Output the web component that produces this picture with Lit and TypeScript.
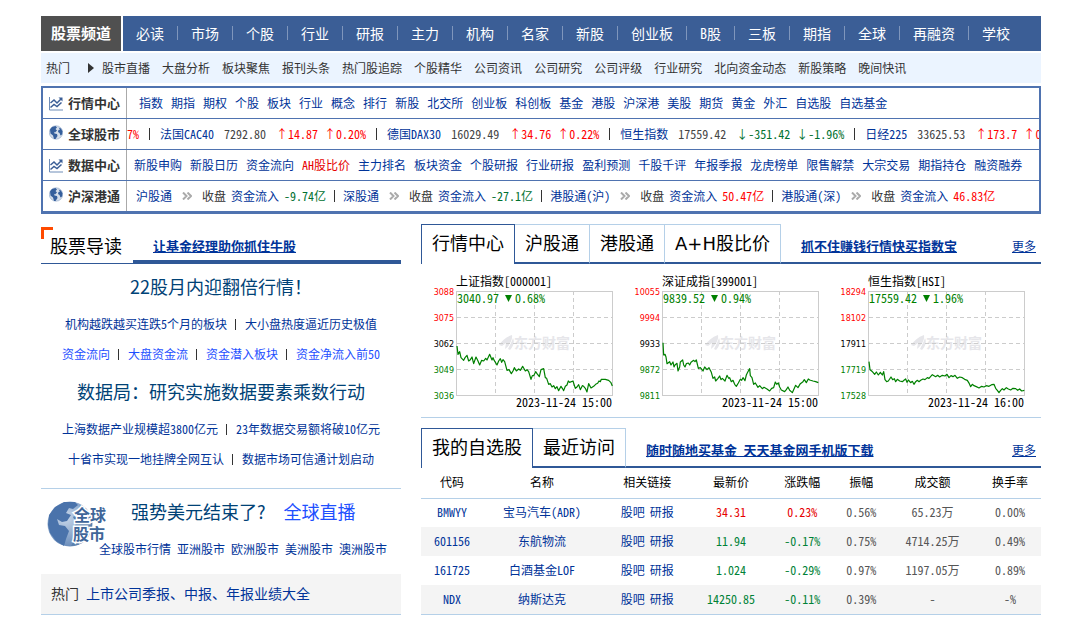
import { LitElement, html, svg, css } from "lit";
import { customElement, state, property } from "lit/decorators.js";
import { classMap } from "lit/directives/class-map.js";

const base = css`
  :host { display: block; }
  * { box-sizing: border-box; }
  a { color: #003399; text-decoration: none; }
  a:hover { text-decoration: underline; }
  svg { display: block; }
`;

type Quote = { name: string; price: string; diff: string; pct: string; up: boolean };
type Flow = { name: string; value: string; up: boolean };
type Chart = {
  title: string; price: string; pct: string; date: string; axis: string[]; points: string;
};

const navItems = "必读 市场 个股 行业 研报 主力 机构 名家 新股 创业板 B股 三板 期指 全球 再融资 学校".split(" ");
const hotItems = "股市直播 大盘分析 板块聚焦 报刊头条 热门股追踪 个股精华 公司资讯 公司研究 公司评级 行业研究 北向资金动态 新股策略 晚间快讯".split(" ");
const marketItems = "指数 期指 期权 个股 板块 行业 概念 排行 新股 北交所 创业板 科创板 基金 港股 沪深港 美股 期货 黄金 外汇 自选股 自选基金".split(" ");
const dataItems = "新股申购 新股日历 资金流向 AH股比价 主力排名 板块资金 个股研报 行业研报 盈利预测 千股千评 年报季报 龙虎榜单 限售解禁 大宗交易 期指持仓 融资融券".split(" ");

const quotes: Quote[] = [
  { name: "法国CAC40", price: "7292.80", diff: "14.87", pct: "0.20%", up: true },
  { name: "德国DAX30", price: "16029.49", diff: "34.76", pct: "0.22%", up: true },
  { name: "恒生指数", price: "17559.42", diff: "-351.42", pct: "-1.96%", up: false },
  { name: "日经225", price: "33625.53", diff: "173.7", pct: "0.52%", up: true },
];
const flows: Flow[] = [
  { name: "沪股通", value: "-9.74亿", up: false },
  { name: "深股通", value: "-27.1亿", up: false },
  { name: "港股通(沪)", value: "50.47亿", up: true },
  { name: "港股通(深)", value: "46.83亿", up: true },
];

// Curve points are thirds of a pixel, measured from the plot's top left corner.
const charts: Chart[] = [
  {
    title: "上证指数[000001]", price: "3040.97", pct: "0.68%", date: "2023-11-24 15:00",
    axis: ["3088", "3075", "3062", "3049", "3036"],
    points: "0,165 3,190 8,182 12,200 20,208 24,200 30,193 35,210 40,206 45,198 50,218 57,198 62,208 68,222 74,208 80,210 86,202 90,207 98,190 105,207 108,200 112,209 120,222 125,210 130,203 134,214 138,206 143,212 150,238 156,236 163,248 168,240 172,230 178,240 185,234 190,238 197,226 205,240 210,236 215,242 222,265 226,254 230,254 236,242 240,248 247,257 252,236 260,233 265,260 269,262 275,280 280,278 285,288 290,284 295,293 300,287 305,299 312,286 316,292 320,299 325,286 330,282 334,270 338,274 348,270 355,292 360,288 365,281 370,296 376,284 380,286 385,292 390,303 395,278 402,291 410,286 416,280 422,277 426,270 430,272 433,265 445,265 455,268 462,275 466,285",
  },
  {
    title: "深证成指[399001]", price: "9839.52", pct: "0.94%", date: "2023-11-24 15:00",
    axis: ["10055", "9994", "9933", "9872", "9811"],
    points: "0,155 2,192 6,190 9,198 12,218 20,212 24,222 30,213 33,228 36,222 42,217 45,240 50,228 52,213 59,207 62,222 66,228 70,218 76,216 80,222 84,214 92,208 96,212 100,207 106,232 112,230 120,240 125,228 132,236 138,230 145,244 150,262 155,258 158,270 165,262 170,255 174,266 178,262 186,270 192,253 197,262 200,260 205,272 210,268 215,280 220,286 226,276 232,265 236,268 240,260 246,269 250,252 254,244 260,233 262,254 267,260 272,280 277,276 285,289 290,284 298,293 303,289 312,294 320,300 326,292 332,290 337,273 341,280 346,276 350,288 355,297 365,302 370,296 375,288 380,298 388,305 392,296 398,283 405,290 412,278 420,272 424,266 430,275 436,264 440,267 450,270 458,272 466,275",
  },
  {
    title: "恒生指数[HSI]", price: "17559.42", pct: "1.96%", date: "2023-11-24 16:00",
    axis: ["18294", "18102", "17911", "17719", "17528"],
    points: "0,212 3,236 8,240 12,244 17,250 22,243 28,252 34,244 40,252 44,242 48,266 53,272 58,270 66,258 71,266 76,263 80,272 85,265 92,270 100,272 105,268 110,264 114,274 118,267 125,275 130,271 135,280 140,272 145,268 150,272 155,268 162,264 168,266 175,260 180,262 190,251 200,257 206,253 212,258 220,253 228,255 234,250 240,260 246,254 252,257 258,253 265,262 272,258 280,260 287,265 295,268 301,278 305,287 310,280 315,284 322,287 330,291 338,286 345,288 352,284 360,286 368,281 375,280 380,292 385,298 390,305 395,298 400,293 405,297 412,290 418,294 425,297 432,292 440,293 446,298 452,294 458,300 466,298",
  },
];

const stocks = [
  ["BMWYY", "宝马汽车(ADR)", "34.31", "0.23%", "0.56%", "65.23万", "0.00%"],
  ["601156", "东航物流", "11.94", "-0.17%", "0.75%", "4714.25万", "0.49%"],
  ["161725", "白酒基金LOF", "1.024", "-0.29%", "0.97%", "1197.05万", "0.89%"],
  ["NDX", "纳斯达克", "14250.85", "-0.11%", "0.39%", "-", "-%"],
];

const chartIcon = html`<svg class="icon" width="14" height="15" viewBox="0 0 14 15" aria-hidden="true">
  <path d="M.5 1v13H14" fill="none" stroke="#6f8db8" />
  <path d="M1.5 7 5 4l3 3 4-4" fill="none" stroke="#3b5e96" stroke-width="1.5" />
  <path d="m1.5 11.5 3.5-3 3 2 4.500-4" fill="none" stroke="#3b5e96" stroke-width="1.500" />
  <path d="M9.500 1.500H13.500V5.500Z" fill="#3b5e96" />
</svg>`;

const globeIcon = html`<svg class="icon globe" width="14" height="15" viewBox="0 0 14 15" aria-hidden="true">
  <circle cx="7" cy="7.500" r="6.700" fill="#d5deea" stroke="#8ba4c8" stroke-width=".6" />
  <path d="M1 4.500 3 2 6.500 1 8 2.500 6.500 4 8 5.500 6 7.500 5 6.800 5.500 8.500 8 9 8.500 11 6.500 14H5L4 10.500 1.500 8.500Z" fill="#355f9c" />
  <path d="M9.500 2.500 12 3.500 13.500 6.500 13 9.500 11.500 10.500 10.500 8 9 7 9.500 5 11 4.500Z" fill="#355f9c" />
</svg>`;

@customElement("index-chart")
class IndexChart extends LitElement {
  @property({ attribute: false }) chart!: Chart;

  static styles = [base, css`
    .plot { font: 12px "Noto Sans Mono CJK SC", "Noto Sans CJK SC", sans-serif; }
    .axis { font: 8px "DejaVu Sans", sans-serif; text-anchor: end; }
    .mark { font: bold 14px "Noto Sans CJK SC", sans-serif; fill: #e6e6ea; }
    .down { fill: #008000; }
    .end { text-anchor: end; }
    .grid { stroke: #cccccc; stroke-dasharray: 4 3; fill: none; }
    .frame { stroke: #cccccc; fill: none; }
    .curve { stroke: #008000; fill: none; stroke-width: 3.600; stroke-linejoin: round; }
  `];

  render() {
    const c = this.chart;
    const colors = ["#ff0000", "#ff0000", "#000000", "#008000", "#008000"];
    return html`<svg class="plot" width="206" height="140" viewBox="0 0 206 140" role="img" aria-label=${c.title}>
      <path d="M84 73C87 69 91 65 97 63 98 68 94 74 90 77L91 71 87 74ZM93 77C95 73 97 69 98 66 100 70 98 75 95 78Z" fill="#e6e6ea" />
      <text class="mark" x="99" y="76">东方财富</text>
      <path class="grid" d="M42 45.500H198M42 71.500H198M42 97.500H198M80.500 19V124M119.500 19V124M158.500 19V124" />
      <rect class="frame" x="41.500" y="19.500" width="156" height="104" />
      ${c.axis.map((v, i) => svg`<text class="axis" x="39" y=${23 + i * 26} fill=${colors[i]}>${v}</text>`)}
      <text x="41" y="14">${c.title}</text>
      <text class="down" x="42" y="31">${c.price}</text>
      <path class="down" transform="translate(${44 + c.price.length * 6} 23)" d="M4 0H11L7.500 7Z" />
      <text class="down" x=${58 + c.price.length * 6} y="31">${c.pct}</text>
      <polyline class="curve" transform="translate(42 19) scale(.3333)" points=${c.points} />
      <text class="end" x="197" y="135">${c.date}</text>
    </svg>`;
  }
}

@customElement("app-root")
class AppRoot extends LitElement {
  @state() marketTab = 0;
  @state() stockTab = 0;

  static styles = [base, css`
    :host {
      min-height: 100vh; background: #fff; color: #333; padding: 16px 32px 0 41px;
      font: 12px/20px "Noto Sans Mono CJK SC", "Noto Sans CJK SC", sans-serif;
    }
    .main-nav { display: flex; gap: 2px; height: 35px; color: #fff; line-height: 34px; overflow: hidden; }
    .main-nav a { color: #fff; }
    .channel { background: #505050; width: 80px; text-align: center; font-size: 15px; font-weight: bold; flex: none; }
    .nav-list { flex: 1; display: flex; align-items: center; padding-bottom: 2px; background: #3b5e96; font-size: 14px; white-space: nowrap; }
    .nav-list a { padding: 0 13px; line-height: 14px; border-right: 1px solid #7f96bc; }
    .nav-list a:last-child { border: 0; }
    .hot-nav { display: flex; align-items: center; gap: 12px; height: 30px; margin: 2px 0 3px; padding-left: 5px; background: #ebf4ff; white-space: nowrap; overflow: hidden; }
    .hot-nav a { color: #333; }
    .hot-label { display: flex; align-items: center; gap: 18px; margin-right: -4px; }

    .hub { border: 2px solid #4f73b0; }
    .hub-row { display: flex; height: 31px; border-bottom: 1px solid #4f73b0; }
    .hub-title { flex: none; width: 84px; display: flex; align-items: center; gap: 5px; padding-left: 6px; border-right: 1px solid #aaa; font-size: 13px; font-weight: bold; white-space: nowrap; }
    .globe { margin-bottom: 4px; }
    .hub-body { flex: 1; min-width: 0; display: flex; align-items: center; overflow: hidden; white-space: nowrap; }
    .links { gap: 8px; }
    .market { padding-left: 12px; }
    .data { padding-left: 7px; }
    .flows { padding-left: 9px; }
    .quote { display: flex; flex: none; }
    .price { margin: 0 10px; color: #444; }
    .pct { margin-left: 6px; }
    .bar { flex: none; display: inline-block; width: 1px; height: 12px; margin: 0 10px; background: #333; }
    .flow { display: flex; flex: none; align-items: center; }
    .flow .chevron { margin: 0 10px; }
    .flow-state { margin-right: 5px; }
    .flow-link { margin-right: 5px; }
    .flows .bar { margin: 0 8px; }
    .red { color: #ff0000; }
    .hub-body a.red { color: #e60000; }
    .green { color: #007130; }

    .columns { display: grid; grid-template-columns: minmax(0, 18fr) minmax(0, 31fr); gap: 20px; margin-top: 10px; }
    .sans { font-family: "Noto Sans CJK SC", sans-serif; }

    .guide-head { display: flex; height: 37px; margin-top: 3px; }
    .guide-title { position: relative; width: 92px; margin: 0; padding-left: 9px; border-bottom: 1px solid #2f5897; font-size: 18px; font-weight: normal; line-height: 36px; color: #000; white-space: nowrap; }
    .guide-title::before { content: ""; position: absolute; left: 0; top: 0; width: 9px; height: 9px; border: solid #ff4a00; border-width: 3px 0 0 3px; }
    .guide-promo { flex: 1; padding-left: 20px; border-bottom: 4px solid #2f5897; line-height: 37px; }
    .promo { font-size: 13px; font-weight: bold; text-decoration: underline; white-space: nowrap; }
    .guide-list { text-align: center; padding-bottom: 14px; border-bottom: 1px solid #b5d0e8; white-space: nowrap; }
    .headline { margin: 0; font-size: 18px; font-weight: normal; line-height: 45px; }
    .headline a { color: #004276; }
    .line { margin: 0; line-height: 30px; }
    .line .bar { height: 11px; margin: 0 9px 0 8px; vertical-align: -1px; }
    .bright, .headline a.bright { color: #1e50ff; }

    .world { display: grid; grid-template-columns: 52px 1fr; height: 85px; padding: 12px 0 0 6px; white-space: nowrap; }
    .world svg { overflow: visible; }
    .world .headline { line-height: 20px; padding-left: 32px; }
    .world .headline a + a { margin-left: 18px; }
    .logo-text { font: bold 16px "Noto Sans CJK SC", sans-serif; fill: #3f6699; stroke: #fff; stroke-width: 3px; paint-order: stroke; }
    .regions { display: flex; gap: 6px; margin-top: 18px; }
    .report { height: 41px; margin: 0; padding-left: 10px; background: #f4f4f4; border-bottom: 1px solid #b5d0e8; font-size: 14px; line-height: 38px; white-space: nowrap; }

    .tabs { display: flex; height: 40px; }
    .tab { flex: none; border: 1px solid #b5d0e8; border-width: 1px 1px 0 0; border-bottom: 2px solid #2f5897; background: #fff; margin: 0; padding: 0 10px; font: 18px/37px "DejaVu Sans", "Noto Sans CJK SC", sans-serif; color: #000; cursor: pointer; }
    .tab.active { border: 1px solid #2f5897; border-bottom: 0; padding: 0 10px 2px; }
    .tabs-rest { flex: 1; display: flex; justify-content: space-between; padding: 5px 5px 0 20px; border-bottom: 2px solid #2f5897; line-height: 34px; }
    .more { text-decoration: underline; }
    .charts { display: grid; grid-template-columns: repeat(3, 206px); margin-left: -6px; padding: 8px 0 5px; }
    .charts-box { border-bottom: 1px solid #b5d0e8; margin-bottom: 10px; overflow: hidden; }

    table { width: 100%; border-collapse: collapse; table-layout: fixed; border-bottom: 1px solid #b5d0e8; text-align: center; white-space: nowrap; }
    th { height: 30px; padding: 0 0 2px; font-weight: normal; color: #000; border-bottom: 1px solid #b5d0e8; }
    td { height: 29px; padding: 0 0 1px; color: #555; }
    tbody tr:nth-child(even) { background: #f4f4f4; }
    td a + a { margin-left: 5px; }
    td.up { color: #e60000; }
    td.down { color: #008237; }
    .c-code { width: 10%; }
    .c-name { width: 19%; }
    .c-link { width: 15%; }
    .c-price { width: 12%; }
    .c-rate { width: 11%; }
    .c-amp { width: 8%; }
    .c-amount { width: 15%; }
  `];

  private bar = html`<i class="bar"></i>`;

  private link(text: string, cls = "") {
    return html`<a class=${cls} href="#">${text}</a>`;
  }

  private hubRow(title: string, icon: unknown, cls: string, body: unknown) {
    return html`<div class="hub-row">
      <div class="hub-title">${icon}<span>${title}</span></div>
      <div class="hub-body ${cls}">${body}</div>
    </div>`;
  }

  private quote(q: Quote) {
    const tone = q.up ? "red" : "green";
    const arrow = q.up ? "↑" : "↓";
    return html`${this.bar}<span class="quote">${this.link(q.name)}<span class="price">${q.price}</span><span class=${tone}>${arrow}${q.diff}</span><span class="pct ${tone}">${arrow}${q.pct}</span></span>`;
  }

  private flow(f: Flow, i: number) {
    return html`${i ? this.bar : ""}<span class="flow">${this.link(f.name)}
      <svg class="chevron" width="10" height="8" viewBox="0 0 10 8" aria-hidden="true"><path d="m1 .5 3.500 3.500L1 7.500M5.500.5 9 4 5.500 7.500" fill="none" stroke="#aaa" stroke-width="2" /></svg>
      <span class="flow-state">收盘</span>${this.link("资金流入", "flow-link")}<span class=${f.up ? "red" : "green"}>${f.value}</span></span>`;
  }

  private tabs(names: string[], active: number, pick: (i: number) => void, promo: string) {
    return html`<div class="tabs">
      ${names.map((n, i) => html`<button class=${classMap({ tab: true, active: i === active })} @click=${() => pick(i)}>${n}</button>`)}
      <div class="tabs-rest">${this.link(promo, "promo")}${this.link("更多", "more")}</div>
    </div>`;
  }

  private line(items: string[], cls = "") {
    return html`<p class="line">${items.map((t, i) => html`${i ? this.bar : ""}${this.link(t, cls)}`)}</p>`;
  }

  render() {
    return html`
      <nav class="main-nav">
        <a class="channel" href="#">股票频道</a>
        <div class="nav-list">${navItems.map((t) => this.link(t))}</div>
      </nav>
      <nav class="hot-nav">
        <span class="hot-label">热门<svg width="6" height="10" viewBox="0 0 6 10" aria-hidden="true"><path d="M0 0 6 5 0 10Z" fill="#333" /></svg></span>
        ${hotItems.map((t) => this.link(t))}
      </nav>
      <section class="hub">
        ${this.hubRow("行情中心", chartIcon, "links market", marketItems.map((t) => this.link(t)))}
        ${this.hubRow("全球股市", globeIcon, "", html`<span class="red">7%</span>${quotes.map((q) => this.quote(q))}`)}
        ${this.hubRow("数据中心", chartIcon, "links data", dataItems.map((t) => this.link(t, t.startsWith("AH") ? "red" : "")))}
        ${this.hubRow("沪深港通", globeIcon, "flows", flows.map((f, i) => this.flow(f, i)))}
      </section>
      <div class="columns">
        <section>
          <header class="guide-head">
            <h2 class="guide-title sans">股票导读</h2>
            <div class="guide-promo">${this.link("让基金经理助你抓住牛股", "promo")}</div>
          </header>
          <div class="guide-list">
            <h3 class="headline sans">${this.link("22股月内迎翻倍行情！")}</h3>
            ${this.line(["机构越跌越买连跌5个月的板块", "大小盘热度逼近历史极值"])}
            ${this.line(["资金流向", "大盘资金流", "资金潜入板块", "资金净流入前50"], "bright")}
            <h3 class="headline sans">${this.link("数据局：研究实施数据要素乘数行动")}</h3>
            ${this.line(["上海数据产业规模超3800亿元", "23年数据交易额将破10亿元"])}
            ${this.line(["十省市实现一地挂牌全网互认", "数据市场可信通计划启动"])}
          </div>
          <div class="world">
            <svg width="62" height="48" viewBox="0 0 62 48" aria-label="全球股市">
              <defs><radialGradient id="sea" cx=".4" cy=".35" r=".7"><stop offset="0" stop-color="#c9d8ea" /><stop offset="1" stop-color="#6488b8" /></radialGradient></defs>
              <circle cx="23" cy="23" r="22.500" fill="url(#sea)" />
              <path d="M2 14 8 6 17 1 28 1 31 4 26 8 22 7 19 12 24 14 20 20 15 21 10 18 12 24 18 25 22 30 19 38 17 45 9 40 3 32 1 24Z" fill="#4a73ab" />
              <path d="M33 4 41 10 45 18 45 29 40 37 31 44 24 45 29 36 26 30 29 22 26 16 31 12Z" fill="#5a80ad" />
              <text class="logo-text" x="27" y="20">全球</text>
              <text class="logo-text" x="26" y="39">股市</text>
            </svg>
            <div>
              <h3 class="headline sans">${this.link("强势美元结束了?")}${this.link("全球直播", "bright")}</h3>
              <div class="regions">${["全球股市行情", "亚洲股市", "欧洲股市", "美洲股市", "澳洲股市"].map((t) => this.link(t))}</div>
            </div>
          </div>
          <p class="report">热门 ${this.link("上市公司季报、中报、年报业绩大全")}</p>
        </section>
        <section>
          ${this.tabs(["行情中心", "沪股通", "港股通", "A+H股比价"], this.marketTab, (i) => (this.marketTab = i), "抓不住赚钱行情快买指数宝")}
          <div class="charts-box">
            <div class="charts">${charts.map((c) => html`<index-chart .chart=${c}></index-chart>`)}</div>
          </div>
          ${this.tabs(["我的自选股", "最近访问"], this.stockTab, (i) => (this.stockTab = i), "随时随地买基金 天天基金网手机版下载")}
          <table>
            <thead><tr>
              <th class="c-code">代码</th><th class="c-name">名称</th><th class="c-link">相关链接</th><th class="c-price">最新价</th>
              <th class="c-rate">涨跌幅</th><th class="c-amp">振幅</th><th class="c-amount">成交额</th><th>换手率</th>
            </tr></thead>
            <tbody>${stocks.map(([code, name, price, rate, amp, amount, turn]) => {
              const tone = rate.startsWith("-") ? "down" : "up";
              return html`<tr>
                <td>${this.link(code)}</td><td>${this.link(name)}</td><td>${this.link("股吧")}${this.link("研报")}</td>
                <td class=${tone}>${price}</td><td class=${tone}>${rate}</td><td>${amp}</td><td>${amount}</td><td>${turn}</td>
              </tr>`;
            })}</tbody>
          </table>
        </section>
      </div>`;
  }
}
